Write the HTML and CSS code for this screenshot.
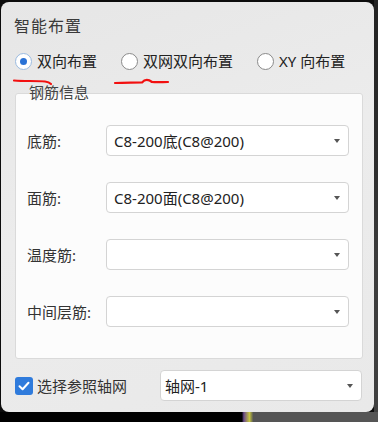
FILE: index.html
```html
<!DOCTYPE html>
<html lang="zh">
<head>
<meta charset="utf-8">
<link rel="stylesheet" href="styles.css">
</head>
<body>
<div class="screen">
  <div class="dialog">
    <div class="title">智能布置</div>
    <div class="radios">
      <label class="radio checked"><span class="dot"></span><span>双向布置</span></label>
      <label class="radio r2"><span class="dot"></span><span>双网双向布置</span></label>
      <label class="radio r3"><span class="dot"></span><span>XY 向布置</span></label>
    </div>
    <div class="group">
      <div class="legend">钢筋信息</div>
      <div class="row"><span class="label">底筋:</span><div class="select"><span>C8-200底(C8@200)</span><i class="caret"></i></div></div>
      <div class="row"><span class="label">面筋:</span><div class="select"><span>C8-200面(C8@200)</span><i class="caret"></i></div></div>
      <div class="row"><span class="label">温度筋:</span><div class="select"><span></span><i class="caret"></i></div></div>
      <div class="row"><span class="label">中间层筋:</span><div class="select"><span></span><i class="caret"></i></div></div>
    </div>
    <div class="footer">
      <label class="check"><span class="box"><svg width="12" height="10" viewBox="0 0 12 10"><path d="M1.5 5.2 L4.6 8.2 L10.5 1.8" fill="none" stroke="#fff" stroke-width="2" stroke-linecap="round" stroke-linejoin="round"/></svg></span><span>选择参照轴网</span></label>
      <div class="select axis"><span>轴网-1</span><i class="caret"></i></div>
    </div>
    <svg class="marks" width="180" height="12" viewBox="0 0 180 12">
      <path d="M13 5.5 C24 6.5 34 5.5 44 6.5 C48 7 49 8 50 9" fill="none" stroke="#f21010" stroke-width="2.2" stroke-linecap="round"/>
      <path d="M114 8 C124 8 134 7.5 141 7.5 C144 4 147 4 151 7 C156 7.5 162 7 167 7" fill="none" stroke="#f21010" stroke-width="2.2" stroke-linecap="round"/>
    </svg>
  </div>
  <div class="edge-right"></div>
  <div class="edge-bottom"></div>
</div>
</body>
</html>
```
FILE: styles.css
```css
* { box-sizing: border-box; }
html, body { margin: 0; padding: 0; }
body {
  width: 378px; height: 422px; overflow: hidden;
  background: #0c0c0c;
  font-family: "Noto Sans", "Noto Sans CJK SC", sans-serif;
  color: #333;
}
.screen { position: relative; width: 378px; height: 422px; padding: 2px 0 0 1px; }
.dialog {
  position: relative;
  width: 373px; height: 410px;
  border-radius: 8px;
  background: linear-gradient(160deg, #e6e6e6 0%, #ececec 45%, #e9e9e9 100%);
}
.title {
  font-size: 16px; letter-spacing: 1px;
  color: #3a3a3a;
  padding: 13px 0 0 13px;
  height: 38px; line-height: 22px;
}
.radios { display: flex; align-items: center; height: 28px; padding-left: 14px; margin-top: 7px; }
.radio { display: flex; align-items: center; gap: 5px; font-size: 15px; color: #222; line-height: 20px; }
.radio .dot {
  width: 17px; height: 17px; border-radius: 50%;
  background: #fff; border: 1px solid #8a8a8a;
  display: flex; align-items: center; justify-content: center;
}
.radio.checked .dot { border-color: #9bbbe0; }
.radio.checked .dot::after { content: ""; width: 7px; height: 7px; border-radius: 50%; background: #2a72d6; }
.r2 { margin-left: 24px; }
.r3 { margin-left: 24px; }
.group {
  position: relative;
  margin: 18px 0 0 14px;
  width: 348px; height: 266px;
  background: #fcfcfc;
  border: 1px solid #dadada;
  border-radius: 3px;
  padding: 31px 13px 0 11px;
  display: flex; flex-direction: column; gap: 26px;
}
.legend {
  position: absolute; left: 13px; top: -11px;
  font-size: 15px; color: #444; line-height: 18px;
}
.row { display: flex; align-items: center; justify-content: space-between; height: 31px; }
.label { font-size: 15px; color: #333; }
.select {
  width: 243px; height: 31px;
  background: #fff;
  border: 1px solid #d4d4d4;
  border-radius: 4px;
  display: flex; align-items: center; justify-content: space-between;
  padding: 0 8px 0 7px;
  font-size: 15px; color: #222;
}
.caret {
  width: 0; height: 0;
  border-left: 3.5px solid transparent; border-right: 3.5px solid transparent;
  border-top: 4px solid #555;
}
.footer { display: flex; align-items: center; justify-content: space-between; margin: 11px 0 0 14px; width: 347px; height: 31px; }
.check { display: flex; align-items: center; gap: 4px; font-size: 15px; color: #333; }
.box {
  width: 18px; height: 18px; border-radius: 3px; background: #2f7bdc;
  display: flex; align-items: center; justify-content: center;
}
.select.axis { width: 202px; height: 31px; padding: 0 8px 0 4px; }
.marks { position: absolute; left: 0; top: 73px; }
.edge-right {
  position: absolute; right: 0; top: 0; width: 4px; height: 422px;
  background: linear-gradient(180deg, #222 0%, #2e2e2e 40%, #3b3b3b 60%, #404040 100%);
}
.edge-bottom {
  position: absolute; left: 0; bottom: 0; width: 378px; height: 10px;
  background: linear-gradient(90deg, #000 0%, #000 64%, #6a4a8a 64.5%, #c5c540 66%, #555 67%, #555 100%);
}
```
